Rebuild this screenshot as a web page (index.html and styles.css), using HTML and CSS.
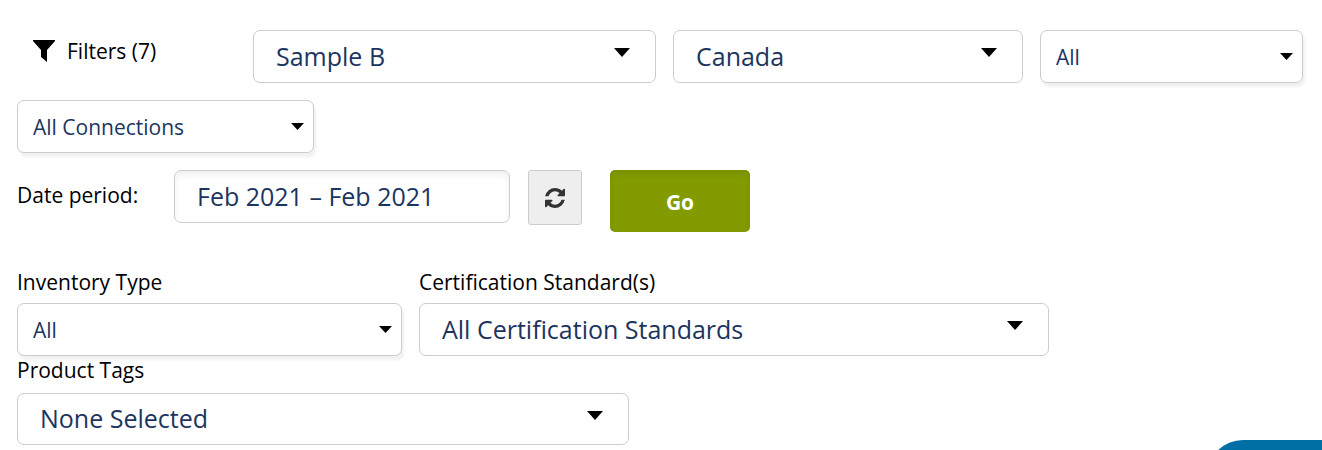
FILE: index.html
```html
<!DOCTYPE html>
<html lang="en">
<head>
  <meta charset="UTF-8" />
  <meta name="viewport" content="width=device-width, initial-scale=1.0">
  <title>Filters</title>
  <link rel="stylesheet" href="styles.css">
</head>
<body>
  <form class="filters">
    <div class="row row-main">
      <div class="filters-title">
        <svg class="funnel" viewBox="0 0 22 22" aria-hidden="true"><path d="M0 0h22v1L14 10v12L8 17v-7L0 1z"/></svg>
        <span>Filters (7)</span>
      </div>
      <div class="dropdown large">
        <select aria-label="Company"><option>Sample B</option></select>
      </div>
      <div class="dropdown large">
        <select aria-label="Country"><option>Canada</option></select>
      </div>
      <div class="dropdown small">
        <select aria-label="Status"><option>All</option></select>
      </div>
    </div>

    <div class="row row-connections">
      <div class="dropdown small">
        <select aria-label="Connections"><option>All Connections</option></select>
      </div>
    </div>

    <div class="row-date">
      <label class="date-label" for="period">Date period:</label>
      <input class="date-input" id="period" type="text" value="Feb 2021 – Feb 2021">
      <button class="refresh" type="button" aria-label="Refresh">
        <svg viewBox="0 0 1536 1536" aria-hidden="true"><path d="M1511 928q0 5-1 7-64 268-268 434.500T764 1536q-146 0-282.500-55T238 1324l-129 129q-19 19-45 19t-45-19-19-45V960q0-26 19-45t45-19h448q26 0 45 19t19 45-19 45l-137 137q71 66 161 102t187 36q134 0 250-65t186-179q11-17 53-117 8-23 30-23h192q13 0 22.500 9.500t9.500 22.500zm25-800v448q0 26-19 45t-45 19h-448q-26 0-45-19t-19-45 19-45l138-138Q969 256 768 256q-134 0-250 65T332 500q-11 17-53 117-8 23-30 23H50q-13 0-22.500-9.500T18 608v-7q65-268 270-434.500T768 0q146 0 284 55.500T1297 212l130-129q19-19 45-19t45 19 19 45z"/></svg>
      </button>
      <button class="go" type="submit">Go</button>
    </div>

    <div class="row row-types">
      <div class="field">
        <label for="inventory">Inventory Type</label>
        <div class="dropdown small">
          <select id="inventory"><option>All</option></select>
        </div>
      </div>
      <div class="field">
        <label for="standards">Certification Standard(s)</label>
        <div class="dropdown large">
          <select id="standards"><option>All Certification Standards</option></select>
        </div>
      </div>
    </div>

    <div class="row row-tags">
      <div class="field tags">
        <label for="tags">Product Tags</label>
        <div class="dropdown large">
          <select id="tags"><option>None Selected</option></select>
        </div>
      </div>
    </div>
  </form>

  <button class="help" type="button" aria-label="Help"></button>
</body>
</html>
```

FILE: styles.css
```css
* {
  box-sizing: border-box;
}
body {
  margin: 0;
  background: #fff;
  color: #000;
  font-family: "Open Sans", sans-serif;
  font-size: 21px;
  line-height: 28px;
  overflow: hidden;
}
.filters {
  padding: 30px 19px 0 17px;
}
.row {
  display: grid;
  column-gap: 17px;
}
.row-main {
  grid-template-columns: 219fr 403fr 350fr 263fr;
  margin-bottom: 17px;
}
.row-connections {
  grid-template-columns: 297fr 972fr;
  margin-bottom: 17px;
}
.row-types {
  grid-template-columns: 385fr 630fr 237fr;
}
.row-tags {
  grid-template-columns: 612fr 657fr;
}
.filters-title {
  display: flex;
  align-items: center;
  gap: 12px;
  height: 42px;
  padding-left: 16px;
}
.funnel {
  width: 22px;
  height: 22px;
}

/* select and its arrow share one grid cell */
.dropdown {
  display: grid;
}
.dropdown select,
.dropdown::after {
  grid-area: 1 / 1;
}
.dropdown select {
  appearance: none;
  width: 100%;
  height: 53px;
  margin: 0;
  border: 1px solid #ccc;
  border-radius: 7px;
  background: #fff;
  color: #1c355e;
  font-family: inherit;
}
.dropdown::after {
  content: "";
  background: #000;
  clip-path: polygon(0 0, 100% 0, 50% 100%);
  justify-self: end;
  pointer-events: none;
}
.small select {
  padding: 0 15px;
  font-size: 21px;
  box-shadow: 2px 4px 3px rgba(0, 0, 0, 0.06);
}
.small::after {
  width: 13px;
  height: 7px;
  align-self: center;
  margin-right: 10px;
}
.large select {
  padding: 0 22px 2px;
  font-size: 25px;
}
.large::after {
  width: 16px;
  height: 9px;
  margin: 18px 26px 0 0;
}

.row-date {
  display: flex;
  align-items: flex-start;
  gap: 18px;
  margin-bottom: 36px;
}
.date-label {
  flex: 0 0 139px;
  padding-top: 11px;
}
.date-input {
  flex: 0 1 336px;
  min-width: 0;
  height: 53px;
  padding: 0 22px 2px;
  border: 1px solid #ccc;
  border-radius: 7px;
  color: #1c355e;
  font-family: inherit;
  font-size: 25px;
  box-shadow: inset 0 4px 6px rgba(0, 0, 0, 0.06);
}
.refresh {
  display: flex;
  align-items: center;
  justify-content: center;
  width: 54px;
  height: 55px;
  padding: 0;
  border: 1px solid #ccc;
  border-radius: 3px;
  background: #eee;
}
.refresh svg {
  width: 20px;
  height: 20px;
  fill: #333;
}
.go {
  width: 140px;
  height: 62px;
  margin-left: 10px;
  padding: 2px 0 0;
  border: 0;
  border-radius: 5px;
  background: #839b00;
  color: #fff;
  font-family: inherit;
  font-size: 21px;
  font-weight: 700;
  box-shadow: inset 0 4px 6px rgba(0, 0, 0, 0.08);
}
.field label {
  display: block;
  height: 35px;
}
.tags label {
  height: 37px;
}
.tags select {
  height: 52px;
}
.help {
  position: fixed;
  right: 0;
  bottom: -62px;
  width: 115px;
  height: 72px;
  border: 0;
  border-radius: 36px 0 0 36px;
  background: #006fa6;
}
```
